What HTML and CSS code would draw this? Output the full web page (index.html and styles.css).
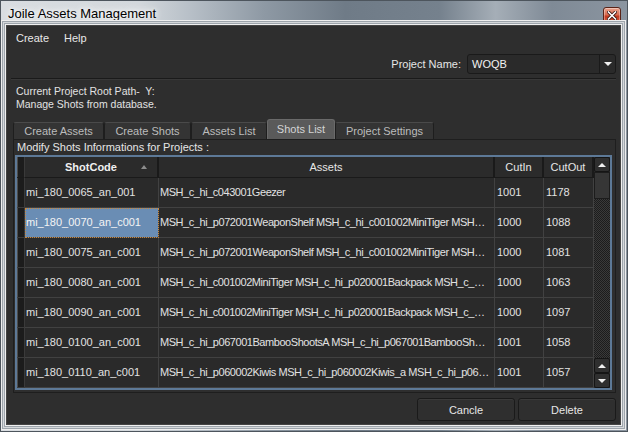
FILE: index.html
```html
<!DOCTYPE html>
<html>
<head>
<meta charset="utf-8">
<title>Joile Assets Management</title>
<link rel="stylesheet" href="styles.css">
</head>
<body>
<div class="window">
  <div class="titlebar">
    <span class="title">Joile Assets Management</span>
    <span class="close">
      <svg width="10" height="9" viewBox="0 0 10 9"><path d="M1.5 1 L8.5 8 M8.5 1 L1.5 8" stroke="#3a1510" stroke-width="3.2" stroke-linecap="square"/><path d="M1.5 1 L8.5 8 M8.5 1 L1.5 8" stroke="#ffffff" stroke-width="1.6" stroke-linecap="square"/></svg>
    </span>
  </div>
  <div class="client">
    <div class="menubar">
      <span class="menu-item">Create</span>
      <span class="menu-item">Help</span>
    </div>
    <div class="projrow">
      <span class="proj-label">Project Name:</span>
      <div class="combo">
        <span class="combo-text">WOQB</span>
        <span class="combo-btn"><span class="tri-down"></span></span>
      </div>
    </div>
    <div class="separator"></div>
    <div class="info">
      <div>Current Project Root Path-&nbsp; Y:</div>
      <div>Manage Shots from database.</div>
    </div>
    <div class="tabbar">
      <div class="tab tab-ca">Create Assets</div>
      <div class="tab tab-cs">Create Shots</div>
      <div class="tab tab-al">Assets List</div>
      <div class="tab tab-sl tab-active">Shots List</div>
      <div class="tab tab-ps">Project Settings</div>
    </div>
    <div class="pane">
      <div class="pane-label">Modify Shots Informations for Projects :</div>
      <div class="table">
        <div class="grid">
          <div class="rh rh-head"></div>
          <div class="hc hc-sort"><span></span><b>ShotCode</b><span class="sort-arrow"></span></div>
          <div class="hc">Assets</div>
          <div class="hc">CutIn</div>
          <div class="hc">CutOut</div>

          <div class="rh"></div>
          <div class="c">mi_180_0065_an_001</div>
          <div class="c c-assets">MSH_c_hi_c043001Geezer</div>
          <div class="c c-num">1001</div>
          <div class="c c-num">1178</div>

          <div class="rh"></div>
          <div class="c c-sel">mi_180_0070_an_c001</div>
          <div class="c c-assets">MSH_c_hi_p072001WeaponShelf MSH_c_hi_c001002MiniTiger MSH…</div>
          <div class="c c-num">1000</div>
          <div class="c c-num">1088</div>

          <div class="rh"></div>
          <div class="c">mi_180_0075_an_c001</div>
          <div class="c c-assets">MSH_c_hi_p072001WeaponShelf MSH_c_hi_c001002MiniTiger MSH…</div>
          <div class="c c-num">1000</div>
          <div class="c c-num">1081</div>

          <div class="rh"></div>
          <div class="c">mi_180_0080_an_c001</div>
          <div class="c c-assets">MSH_c_hi_c001002MiniTiger MSH_c_hi_p020001Backpack MSH_c_…</div>
          <div class="c c-num">1000</div>
          <div class="c c-num">1063</div>

          <div class="rh"></div>
          <div class="c">mi_180_0090_an_c001</div>
          <div class="c c-assets">MSH_c_hi_c001002MiniTiger MSH_c_hi_p020001Backpack MSH_c_…</div>
          <div class="c c-num">1000</div>
          <div class="c c-num">1097</div>

          <div class="rh"></div>
          <div class="c">mi_180_0100_an_c001</div>
          <div class="c c-assets">MSH_c_hi_p067001BambooShootsA MSH_c_hi_p067001BambooSh…</div>
          <div class="c c-num">1001</div>
          <div class="c c-num">1058</div>

          <div class="rh"></div>
          <div class="c">mi_180_0110_an_c001</div>
          <div class="c c-assets">MSH_c_hi_p060002Kiwis MSH_c_hi_p060002Kiwis_a MSH_c_hi_p06…</div>
          <div class="c c-num">1001</div>
          <div class="c c-num">1057</div>
        </div>
        <div class="vscroll">
          <div class="sb-btn"><span class="tri-up"></span></div>
          <div class="sb-handle"></div>
          <div class="sb-track"></div>
          <div class="sb-btn"><span class="tri-up"></span></div>
          <div class="sb-btn"><span class="tri-down"></span></div>
        </div>
      </div>
    </div>
    <div class="buttons">
      <button class="btn">Cancle</button>
      <button class="btn">Delete</button>
    </div>
  </div>
</div>
</body>
</html>
```

FILE: styles.css
```css
html, body {
  margin: 0;
  padding: 0;
}
body {
  width: 628px;
  height: 432px;
  overflow: hidden;
  background: #2e2e2e;
  font-family: "Liberation Sans", Arial, sans-serif;
}
.window {
  box-sizing: border-box;
  width: 628px;
  height: 432px;
  border: 1px solid #4d555d;
  background: linear-gradient(90deg, #d9dde1 0%, #d3d8dc 22%, #b8c0c8 30%, #8e99a4 42%, #6f7b87 55%, #75818d 70%, #a5aeb7 79%, #7f8a96 88%, #8b95a0 100%);
  display: flex;
  flex-direction: column;
}
.titlebar {
  height: 25px;
  flex: none;
  display: flex;
  justify-content: space-between;
  align-items: flex-start;
}
.title {
  margin: 5px 0 0 7px;
  font-size: 13px;
  line-height: 16px;
  color: #000;
  text-shadow: 0 0 4px #fff, 0 0 8px rgba(255,255,255,0.9), 0 0 12px rgba(255,255,255,0.7);
}
.close {
  box-sizing: border-box;
  margin: 6px 6px 0 0;
  width: 18px;
  height: 17px;
  border: 1px solid #5a2418;
  border-radius: 3px;
  background: linear-gradient(#eaa58f 0%, #d86a4f 45%, #c2391f 55%, #d4583c 100%);
  box-shadow: inset 0 0 0 1px rgba(255,255,255,0.35);
  display: flex;
  align-items: center;
  justify-content: center;
}
.client {
  margin: 0 7px 7px 6px;
  height: 398px;
  flex: none;
  background: #2e2e2e;
  display: flex;
  flex-direction: column;
  box-shadow: 0 0 0 1px #444444, 0 0 0 2px #f0f0f0, 0 0 0 3px #9ea5ac, 0 0 0 4px #d5d8db, 0 0 0 5px #9ea5ac, 0 0 0 6px #eeeeee;
  font-size: 11px;
  color: #e4e4e4;
}
.menubar {
  height: 24px;
  flex: none;
  display: flex;
  align-items: center;
  padding-left: 9px;
}
.menu-item {
  margin-right: 15px;
  color: #e8e8e8;
}
.projrow {
  margin-top: 4px;
  height: 20px;
  flex: none;
  display: flex;
  justify-content: flex-end;
  align-items: center;
  gap: 6px;
  padding-right: 4px;
}
.proj-label {
  color: #e6e6e6;
}
.combo {
  box-sizing: border-box;
  width: 149px;
  height: 20px;
  border: 1px solid #1a1a1a;
  border-radius: 3px;
  background: #2a2a2a;
  display: flex;
}
.combo-text {
  flex: 1;
  padding-left: 4px;
  line-height: 19px;
  color: #f2f2f2;
}
.combo-btn {
  width: 15px;
  border-left: 1px solid #1a1a1a;
  display: flex;
  align-items: center;
  justify-content: center;
}
.tri-down {
  width: 0;
  height: 0;
  border-left: 4px solid transparent;
  border-right: 4px solid transparent;
  border-top: 4px solid #f0f0f0;
}
.tri-up {
  width: 0;
  height: 0;
  border-left: 4px solid transparent;
  border-right: 4px solid transparent;
  border-bottom: 4px solid #f0f0f0;
}
.separator {
  margin: 4px 4px 0 4px;
  height: 1px;
  flex: none;
  background: #1a1a1a;
  border-bottom: 1px solid #383838;
}
.info {
  margin-top: 5px;
  padding-left: 9px;
  font-size: 10.5px;
  line-height: 13px;
  color: #e2e2e2;
  flex: none;
}
.tabbar {
  margin-top: 8px;
  height: 20px;
  flex: none;
  display: flex;
  align-items: flex-end;
  padding-left: 6px;
}
.tab {
  box-sizing: border-box;
  height: 17px;
  line-height: 16px;
  text-align: center;
  color: #bcbcbc;
  background: #343434;
  border: 1px solid #1e1e1e;
  border-bottom: none;
  border-top-color: #4a4a4a;
  border-radius: 3px 3px 0 0;
  white-space: nowrap;
}
.tab-ca { width: 91px; }
.tab-cs { width: 87px; }
.tab-al { width: 76px; }
.tab-sl { width: 68px; }
.tab-ps { width: 99px; }
.tab-active {
  height: 20px;
  line-height: 18px;
  background: #5a5a5a;
  color: #d4d4d4;
  border-color: #6a6a6a;
}
.pane {
  box-sizing: border-box;
  margin: 0 4px 0 6px;
  height: 254px;
  flex: none;
  border: 1px solid #1e1e1e;
  padding-bottom: 2px;
}
.pane-label {
  height: 15px;
  line-height: 15px;
  padding-left: 3px;
  color: #e6e6e6;
}
.table {
  box-sizing: border-box;
  margin: 0 3px 0 1px;
  height: 235px;
  border: 2px solid #5d7997;
  display: flex;
  background: #2a2a2a;
}
.grid {
  display: grid;
  grid-template-columns: 8px 134px 336px 49px 50px;
  grid-template-rows: 21px repeat(7, 30px);
}
.grid > div {
  box-sizing: border-box;
  min-width: 0;
}
.rh {
  background: #1c1c1c;
  border-bottom: 1px solid #3a3a3a;
  border-right: 1px solid #3a3a3a;
  box-shadow: inset 1px 0 0 #4c4c4c;
}
.rh-head {
  border-bottom-color: #1a1a1a;
}
.hc {
  background: #2b2b2b;
  border-right: 2px solid #1a1a1a;
  border-bottom: 1px solid #1a1a1a;
  line-height: 20px;
  text-align: center;
  color: #e6e6e6;
  white-space: nowrap;
  overflow: hidden;
}
.hc-sort {
  display: grid;
  grid-template-columns: 1fr auto 1fr;
  align-items: center;
}
.hc-sort b {
  font-weight: bold;
  color: #f0f0f0;
}
.sort-arrow {
  justify-self: end;
  margin-right: 10px;
  width: 0;
  height: 0;
  border-left: 3.5px solid transparent;
  border-right: 3.5px solid transparent;
  border-bottom: 4px solid #8c8c8c;
}
.c {
  background: #2a2a2a;
  border-right: 1px solid #414141;
  border-bottom: 1px solid #414141;
  padding-left: 1px;
  line-height: 29px;
  color: #e2e2e2;
  white-space: nowrap;
  overflow: hidden;
  text-overflow: ellipsis;
}
.c-assets {
  letter-spacing: -0.45px;
}
.c-num {
  padding-left: 2px;
}
.c-sel {
  background: #6a8db4;
  outline: 1px dotted #c9873c;
  outline-offset: -1px;
  color: #f4f4f4;
}
.vscroll {
  width: 16px;
  display: flex;
  flex-direction: column;
}
.sb-btn {
  box-sizing: border-box;
  height: 15px;
  flex: none;
  border: 1px solid #151515;
  border-radius: 2px;
  background: #2f2f2f;
  display: flex;
  align-items: center;
  justify-content: center;
}
.sb-handle {
  box-sizing: border-box;
  height: 27px;
  flex: none;
  background: #363636;
  border: 1px solid #1c1c1c;
}
.sb-track {
  flex: 1;
  background: repeating-conic-gradient(#1c1c1c 0 25%, #3a3a3a 0 50%) 0 0 / 2px 2px;
}
.buttons {
  margin-top: 5px;
  flex: none;
  display: flex;
  justify-content: flex-end;
  gap: 3px;
  padding-right: 4px;
}
.btn {
  box-sizing: border-box;
  width: 98px;
  height: 23px;
  border: 1px solid #1a1a1a;
  border-radius: 3px;
  background: #2f2f2f;
  box-shadow: inset 0 1px 0 #3a3a3a;
  color: #e6e6e6;
  font-family: "Liberation Sans", Arial, sans-serif;
  font-size: 11px;
  padding: 0;
}
```
